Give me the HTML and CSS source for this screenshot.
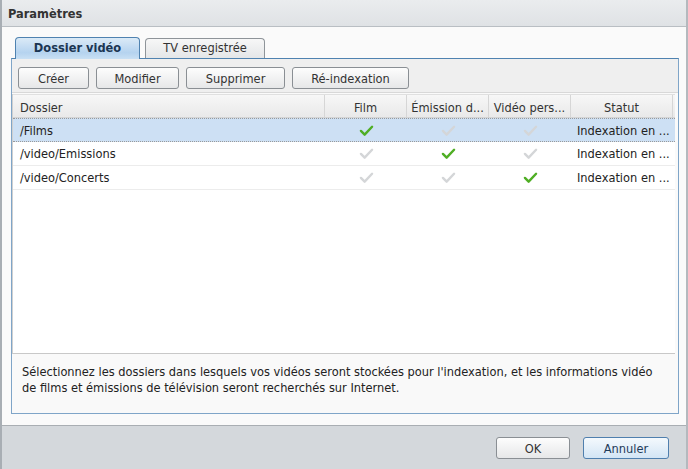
FILE: index.html
```html
<!DOCTYPE html>
<html lang="fr">
<head>
    <meta charset="UTF-8">
    <title>Paramètres</title>
    <link rel="stylesheet" href="styles.css">
</head>
<body>

<div class="window">
    <div class="titlebar">Paramètres</div>

    <div class="content">
        <div class="tabs">
            <div class="tab active">Dossier vidéo</div>
            <div class="tab">TV enregistrée</div>
        </div>

        <div class="panel">
            <div class="toolbar">
                <button class="btn btn-creer">Créer</button>
                <button class="btn btn-modifier">Modifier</button>
                <button class="btn btn-supprimer">Supprimer</button>
                <button class="btn btn-reindex">Ré-indexation</button>
            </div>

            <div class="grid">
                <div class="row head">
                    <div class="cell c-dossier">Dossier</div>
                    <div class="cell c-check">Film</div>
                    <div class="cell c-check" title="Émission de télévision">Émission d...</div>
                    <div class="cell c-check" title="Vidéo personnelle">Vidéo pers...</div>
                    <div class="cell c-statut">Statut</div>
                </div>
                <div class="row selected">
                    <div class="cell c-dossier">/Films</div>
                    <div class="cell c-check"><svg class="tick on" viewBox="0 0 16 14"><path d="M2 7.5 L6 11.5 L14 3"/></svg></div>
                    <div class="cell c-check"><svg class="tick" viewBox="0 0 16 14"><path d="M2 7.5 L6 11.5 L14 3"/></svg></div>
                    <div class="cell c-check"><svg class="tick" viewBox="0 0 16 14"><path d="M2 7.5 L6 11.5 L14 3"/></svg></div>
                    <div class="cell c-statut" title="Indexation en cours">Indexation en ...</div>
                </div>
                <div class="row">
                    <div class="cell c-dossier">/video/Emissions</div>
                    <div class="cell c-check"><svg class="tick" viewBox="0 0 16 14"><path d="M2 7.5 L6 11.5 L14 3"/></svg></div>
                    <div class="cell c-check"><svg class="tick on" viewBox="0 0 16 14"><path d="M2 7.5 L6 11.5 L14 3"/></svg></div>
                    <div class="cell c-check"><svg class="tick" viewBox="0 0 16 14"><path d="M2 7.5 L6 11.5 L14 3"/></svg></div>
                    <div class="cell c-statut" title="Indexation en cours">Indexation en ...</div>
                </div>
                <div class="row">
                    <div class="cell c-dossier">/video/Concerts</div>
                    <div class="cell c-check"><svg class="tick" viewBox="0 0 16 14"><path d="M2 7.5 L6 11.5 L14 3"/></svg></div>
                    <div class="cell c-check"><svg class="tick" viewBox="0 0 16 14"><path d="M2 7.5 L6 11.5 L14 3"/></svg></div>
                    <div class="cell c-check"><svg class="tick on" viewBox="0 0 16 14"><path d="M2 7.5 L6 11.5 L14 3"/></svg></div>
                    <div class="cell c-statut" title="Indexation en cours">Indexation en ...</div>
                </div>
            </div>

            <div class="description">
                Sélectionnez les dossiers dans lesquels vos vidéos seront stockées pour l'indexation, et les informations vidéo
                de films et émissions de télévision seront recherchés sur Internet.
            </div>
        </div>
    </div>

    <div class="footer">
        <button class="btn btn-ok">OK</button>
        <button class="btn btn-annuler">Annuler</button>
    </div>
</div>

</body>
</html>
```

FILE: styles.css
```css
body {
    margin: 0;
    font-family: "DejaVu Sans Condensed", "DejaVu Sans", sans-serif;
    font-size: 12.7px;
    color: #222;
    background: #fff;
}

.window {
    width: 688px;
    height: 469px;
    box-sizing: border-box;
    border-left: 2px solid #a8aeb4;
    border-right: 2px solid #b4b9be;
    display: flex;
    flex-direction: column;
    background: #fafafa;
}

.titlebar {
    height: 27px;
    box-sizing: border-box;
    padding: 6px 0 0 6px;
    background: linear-gradient(#eaecee, #dfe2e5);
    border-bottom: 1px solid #b9bec3;
    font-weight: bold;
    color: #333;
}

.content {
    flex: 1;
    padding: 10px 7px 10px 9px;
    display: flex;
    flex-direction: column;
}

.tabs {
    display: flex;
    gap: 5px;
    padding-left: 4px;
    height: 21px;
    align-items: flex-end;
}

.tab {
    height: 20px;
    box-sizing: border-box;
    line-height: 18px;
    border: 1px solid #8e9499;
    border-bottom: none;
    border-radius: 4px 4px 0 0;
    background: linear-gradient(#f7f7f7, #e4e6e8);
    color: #333;
    width: 120px;
    text-align: center;
}

.tab.active {
    height: 22px;
    width: 125px;
    line-height: 20px;
    font-weight: bold;
    color: #1b3552;
    border-color: #4f82b0;
    background: linear-gradient(#dbeaf7, #b5d3ef 70%, #c9e0f4);
    position: relative;
    z-index: 1;
    margin-bottom: -1px;
}

.panel {
    height: 356px;
    box-sizing: border-box;
    border: 1px solid #7fa5c8;
    border-top-color: #4f82b0;
    display: flex;
    flex-direction: column;
    background: #fafafa;
}

.toolbar {
    height: 34px;
    box-sizing: border-box;
    padding: 8px 0 0 6px;
    display: flex;
    gap: 7px;
    background: #efefef;
    border-bottom: 1px solid #d8d8d8;
}

.btn {
    height: 22px;
    box-sizing: border-box;
    border: 1px solid #8a8f94;
    border-radius: 3px;
    background: linear-gradient(#fdfdfd, #e6e7e8);
    font-family: inherit;
    font-size: 12.7px;
    color: #333;
    padding: 0;
}

.btn-creer { width: 71px; }
.btn-modifier { width: 83px; }
.btn-supprimer { width: 99px; }
.btn-reindex { width: 117px; }

.grid {
    flex: 1;
    margin: 1px 3px 0 0;
    background: #fff;
    border-left: 1px solid #d0d0d0;
    border-bottom: 1px solid #c8c8c8;
}

.row {
    display: flex;
    height: 23px;
    border-bottom: 1px solid #ececec;
    background: #fff;
}

.row.head {
    height: 22px;
    background: linear-gradient(#f7f7f7, #e9e9e9);
    border-top: 1px solid #e0e0e0;
    border-bottom: 1px solid #d4d4d4;
    color: #333;
}

.row.selected {
    background: #cde0f4;
    border-top: 1px dotted #9a9a9a;
    border-bottom: 1px dotted #9a9a9a;
    height: 22px;
}

.cell {
    box-sizing: border-box;
    padding: 1px 7px 0 7px;
    line-height: 22px;
    white-space: nowrap;
    overflow: hidden;
}

.head .cell {
    border-right: 1px solid #d6d6d6;
    padding-top: 2px;
}

.c-dossier { width: 312px; }

.c-check {
    width: 82px;
    text-align: center;
    padding: 0 2px;
    display: flex;
    align-items: center;
    justify-content: center;
}

.head .c-check { display: block; padding: 2px 2px 0 2px; }

.c-statut { width: 102px; padding: 1px 6px 0 6px; }
.head .c-statut { text-align: center; }

.tick {
    width: 15px;
    height: 13px;
}

.tick path {
    fill: none;
    stroke: #d4d6d8;
    stroke-width: 2.6;
    stroke-linecap: round;
    stroke-linejoin: round;
}

.tick.on path {
    stroke: #4fae24;
}

.description {
    height: 59px;
    box-sizing: border-box;
    padding: 10px 10px 0 10px;
    line-height: 16px;
    color: #222;
    background: #f9f9f9;
}

.footer {
    height: 44px;
    box-sizing: border-box;
    border-top: 1px solid #a9aeb3;
    background: #d4d8dc;
    display: flex;
    justify-content: flex-end;
    gap: 13px;
    padding: 11px 17px 0 0;
}

.btn-ok { width: 74px; }

.btn-annuler {
    width: 86px;
    border-color: #4f7fae;
    background: linear-gradient(#f4f9fd, #d3e5f5);
    color: #1f3b5a;
}
```
